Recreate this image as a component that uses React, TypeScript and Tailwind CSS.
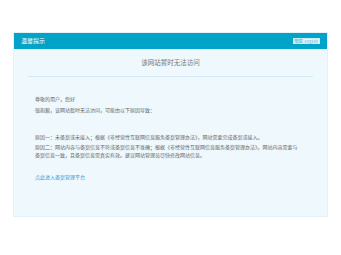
export default function App() {
  const font = { fontFamily: '"Noto Sans CJK SC", "Noto Sans", sans-serif' };

  return (
    <div className="w-[341px] h-[255px] bg-white pt-[32px] pl-[13px]" style={font}>
      <div className="w-[315px] border border-[#e3f2f9]">
        {/* Header */}
        <div className="h-[16px] bg-[#02a3c9] flex items-center justify-between px-[7px]">
          <span className="text-[6px] leading-none text-white">温馨提示</span>
          <span className="flex items-center gap-[1px] bg-[#c9ecf5] px-[1px] py-[1px] text-[4px] leading-none text-[#5ab8d4]">
            <span>繁體</span>
            <span className="bg-[#e6f6fb] px-[1px]">English</span>
          </span>
        </div>

        {/* Body */}
        <div className="h-[167px] bg-[#eef8fd] px-[14px]">
          <div className="h-[28px] flex items-center justify-center border-b border-[#d3eaf6]">
            <h1 className="text-[6.5px] leading-none text-[#777]">该网站暂时无法访问</h1>
          </div>

          <div className="pl-[7px] text-[5px] leading-[8px] text-[#666]">
            <p className="mt-[18px]">尊敬的用户，您好</p>
            <p className="mt-[3px]">很抱歉，该网站暂时无法访问，可能由以下原因导致：</p>

            <p className="mt-[19px] w-[264px]">
              原因一：未备案或未接入；根据《非经营性互联网信息服务备案管理办法》，网站需要完成备案或接入。
            </p>
            <p className="mt-[2px] w-[264px]">
              原因二：网站内容与备案信息不符或备案信息不准确；根据《非经营性互联网信息服务备案管理办法》，网站内容需要与备案信息一致，且备案信息需真实有效。建议网站管理员尽快修改网站信息。
            </p>

            <a className="block mt-[14px] text-[#3a9ad6]">点此进入备案管理平台</a>
          </div>
        </div>
      </div>
    </div>
  );
}
